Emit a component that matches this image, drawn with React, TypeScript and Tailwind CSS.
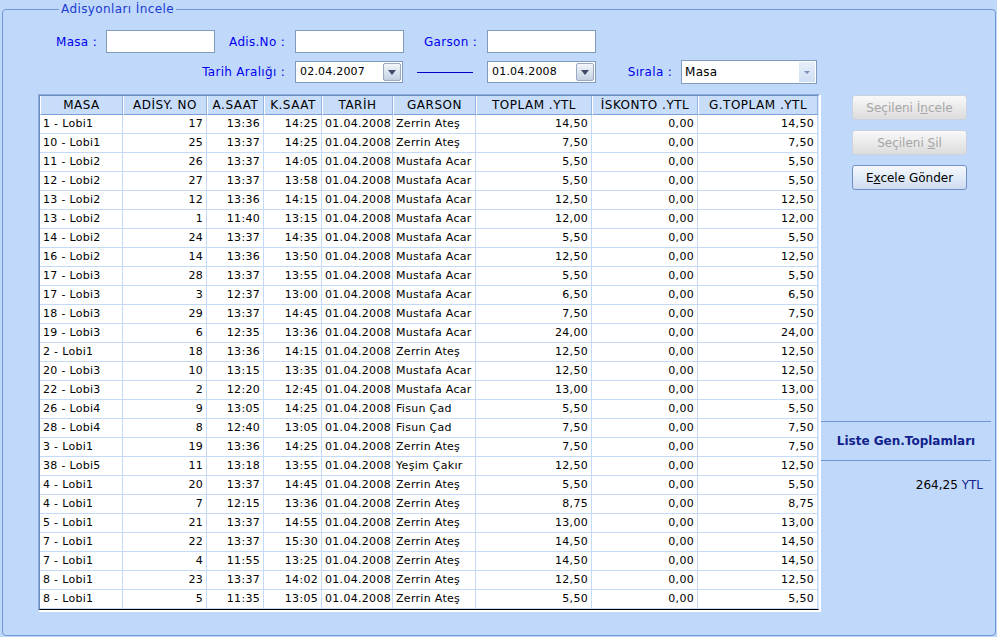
import React from "react";

type Row = [string, string, string, string, string, string];

// masa, adisyon no, açılış, kapanış, garson, toplam
const rows: Row[] = [
  ["1 - Lobi1", "17", "13:36", "14:25", "Zerrin Ateş", "14,50"],
  ["10 - Lobi1", "25", "13:37", "14:25", "Zerrin Ateş", "7,50"],
  ["11 - Lobi2", "26", "13:37", "14:05", "Mustafa Acar", "5,50"],
  ["12 - Lobi2", "27", "13:37", "13:58", "Mustafa Acar", "5,50"],
  ["13 - Lobi2", "12", "13:36", "14:15", "Mustafa Acar", "12,50"],
  ["13 - Lobi2", "1", "11:40", "13:15", "Mustafa Acar", "12,00"],
  ["14 - Lobi2", "24", "13:37", "14:35", "Mustafa Acar", "5,50"],
  ["16 - Lobi2", "14", "13:36", "13:50", "Mustafa Acar", "12,50"],
  ["17 - Lobi3", "28", "13:37", "13:55", "Mustafa Acar", "5,50"],
  ["17 - Lobi3", "3", "12:37", "13:00", "Mustafa Acar", "6,50"],
  ["18 - Lobi3", "29", "13:37", "14:45", "Mustafa Acar", "7,50"],
  ["19 - Lobi3", "6", "12:35", "13:36", "Mustafa Acar", "24,00"],
  ["2 - Lobi1", "18", "13:36", "14:15", "Zerrin Ateş", "12,50"],
  ["20 - Lobi3", "10", "13:15", "13:35", "Mustafa Acar", "12,50"],
  ["22 - Lobi3", "2", "12:20", "12:45", "Mustafa Acar", "13,00"],
  ["26 - Lobi4", "9", "13:05", "14:25", "Fisun Çad", "5,50"],
  ["28 - Lobi4", "8", "12:40", "13:05", "Fisun Çad", "7,50"],
  ["3 - Lobi1", "19", "13:36", "14:25", "Zerrin Ateş", "7,50"],
  ["38 - Lobi5", "11", "13:18", "13:55", "Yeşim Çakır", "12,50"],
  ["4 - Lobi1", "20", "13:37", "14:45", "Zerrin Ateş", "5,50"],
  ["4 - Lobi1", "7", "12:15", "13:36", "Zerrin Ateş", "8,75"],
  ["5 - Lobi1", "21", "13:37", "14:55", "Zerrin Ateş", "13,00"],
  ["7 - Lobi1", "22", "13:37", "15:30", "Zerrin Ateş", "14,50"],
  ["7 - Lobi1", "4", "11:55", "13:25", "Zerrin Ateş", "14,50"],
  ["8 - Lobi1", "23", "13:37", "14:02", "Zerrin Ateş", "12,50"],
  ["8 - Lobi1", "5", "11:35", "13:05", "Zerrin Ateş", "5,50"],
];

const headers = [
  "MASA",
  "ADİSY. NO",
  "A.SAAT",
  "K.SAAT",
  "TARİH",
  "GARSON",
  "TOPLAM .YTL",
  "İSKONTO .YTL",
  "G.TOPLAM .YTL",
];

const cols = "grid grid-cols-[83px_84px_57px_58px_71px_83px_116px_106px_120px]";
const cell = "h-[19px] border-r border-b border-[#c4daf8] leading-[18px]";

function DateBox({ value, className = "" }: { value: string; className?: string }) {
  return (
    <div
      className={`flex h-[22px] items-center justify-between border border-[#7f9db9] bg-white pl-[4px] pr-[1px] ${className}`}
    >
      <span className="text-[11px] tracking-[0.2px] text-black">{value}</span>
      <div className="flex h-[18px] w-[18px] items-center justify-center rounded-[2px] border border-[#9aaac4] bg-gradient-to-b from-[#f4f7fb] to-[#c4d0e2]">
        <svg width="8" height="5" viewBox="0 0 8 5">
          <path d="M0 0h8L4 5z" fill="#3d4b69" />
        </svg>
      </div>
    </div>
  );
}

function Btn({
  children,
  enabled = false,
}: {
  children: React.ReactNode;
  enabled?: boolean;
}) {
  return (
    <div
      className={
        enabled
          ? "ml-[31px] flex h-[25px] w-[115px] items-center justify-center rounded-[3px] border border-[#6f90c6] bg-gradient-to-b from-[#f6f9fd] to-[#cddcf1] text-[12px] text-black"
          : "ml-[31px] flex h-[25px] w-[115px] items-center justify-center rounded-[3px] border border-[#c9d2de] bg-gradient-to-b from-[#f9f9f9] to-[#dcdcdc] text-[12px] text-[#a6a6a6]"
      }
    >
      <span>{children}</span>
    </div>
  );
}

export default function App() {
  return (
    <div className="h-[637px] w-[997px] overflow-hidden bg-[#c0d9fb] pt-[2px] pl-[2px] font-['DejaVu_Sans',sans-serif]">
      <fieldset className="h-[634px] w-[994px] rounded-[4px] border border-[#7098d2]">
        <legend className="ml-[56px] px-[2px] text-[12px] leading-[14px] tracking-[0.4px] text-[#1b3bd0]">
          Adisyonları İncele
        </legend>

        {/* filtre satırı 1 */}
        <div className="mt-[14px] flex h-[23px] items-center text-[12px] tracking-[0.3px] text-[#0000ee]">
          <span className="w-[94px] text-right">Masa :</span>
          <div className="ml-[9px] h-[23px] w-[109px] border border-[#7f9db9] bg-white" />
          <span className="w-[70px] text-right">Adis.No :</span>
          <div className="ml-[10px] h-[23px] w-[109px] border border-[#7f9db9] bg-white" />
          <span className="w-[73px] text-right">Garson :</span>
          <div className="ml-[10px] h-[23px] w-[109px] border border-[#7f9db9] bg-white" />
        </div>

        {/* filtre satırı 2 */}
        <div className="mt-[7px] flex h-[24px] items-center text-[12px] tracking-[0.3px] text-[#0000ee]">
          <span className="w-[282px] text-right">Tarih Aralığı :</span>
          <DateBox value="02.04.2007" className="ml-[10px] w-[108px]" />
          <div className="ml-[14px] h-px w-[56px] bg-[#0000cc]" />
          <DateBox value="01.04.2008" className="ml-[14px] w-[109px]" />
          <span className="w-[76px] text-right">Sırala :</span>
          <div className="ml-[9px] flex h-[24px] w-[136px] items-stretch border border-[#7f9db9] bg-white">
            <span className="flex-1 pl-[3px] text-[12px] leading-[22px] text-black">Masa</span>
            <div className="m-px flex w-[16px] items-center justify-center bg-gradient-to-b from-[#e6eefa] to-[#cfdff4]">
              <svg width="6" height="3" viewBox="0 0 6 3">
                <path d="M0 0h6L3 3z" fill="#7a90b6" />
              </svg>
            </div>
          </div>
        </div>

        <div className="mt-[10px] flex">
          {/* tablo */}
          <div className="ml-[35px] border-t border-r-2 border-b-2 border-l border-t-[#8eaad6] border-r-white border-b-white border-l-[#8eaad6]">
            <div className="border-t border-r border-b border-l border-t-[#6b8cc4] border-r-[#dbe8fb] border-b-black border-l-[#6b8cc4] bg-white text-[11px] tracking-[0.3px] text-black">
              <div className={`${cols} bg-[#c8ddfa] text-[12px] tracking-[0.5px]`}>
                {headers.map((h) => (
                  <div
                    key={h}
                    className="flex h-[19px] items-center justify-center overflow-hidden whitespace-nowrap border-r border-b border-l border-r-[#94b3e2] border-b-[#7b9fd6] border-l-white"
                  >
                    {h}
                  </div>
                ))}
              </div>
              {rows.map((r, i) => (
                <div key={i} className={cols}>
                  <div className={`${cell} overflow-hidden pl-[3px] whitespace-nowrap`}>{r[0]}</div>
                  <div className={`${cell} pr-[3px] text-right`}>{r[1]}</div>
                  <div className={`${cell} pr-[3px] text-right`}>{r[2]}</div>
                  <div className={`${cell} pr-[3px] text-right`}>{r[3]}</div>
                  <div className={`${cell} overflow-hidden pr-[1px] text-right whitespace-nowrap`}>
                    01.04.2008
                  </div>
                  <div className={`${cell} overflow-hidden pl-[3px] whitespace-nowrap`}>{r[4]}</div>
                  <div className={`${cell} pr-[3px] text-right`}>{r[5]}</div>
                  <div className={`${cell} pr-[3px] text-right`}>0,00</div>
                  <div className={`${cell} pr-[3px] text-right`}>{r[5]}</div>
                </div>
              ))}
            </div>
          </div>

          {/* sağ panel */}
          <div className="flex w-[173px] flex-col">
            <div className="mt-px flex flex-col gap-[10px]">
              <Btn>
                Seçileni İ<span className="underline">n</span>cele
              </Btn>
              <Btn>
                Seçileni <span className="underline">S</span>il
              </Btn>
              <Btn enabled>
                E<span className="underline">x</span>cele Gönder
              </Btn>
            </div>
            <div className="mt-[231px] h-px w-[170px] bg-[#6f96d6]" />
            <div className="flex h-[38px] w-[170px] items-center justify-center text-[12px] font-bold text-[#11228c]">
              Liste Gen.Toplamları
            </div>
            <div className="h-px w-[170px] bg-[#6f96d6]" />
            <div className="mt-[17px] w-[162px] text-right text-[12px] leading-[14px]">
              <span className="text-black">264,25 </span>
              <span className="text-[#13238f]">YTL</span>
            </div>
          </div>
        </div>
      </fieldset>
    </div>
  );
}
